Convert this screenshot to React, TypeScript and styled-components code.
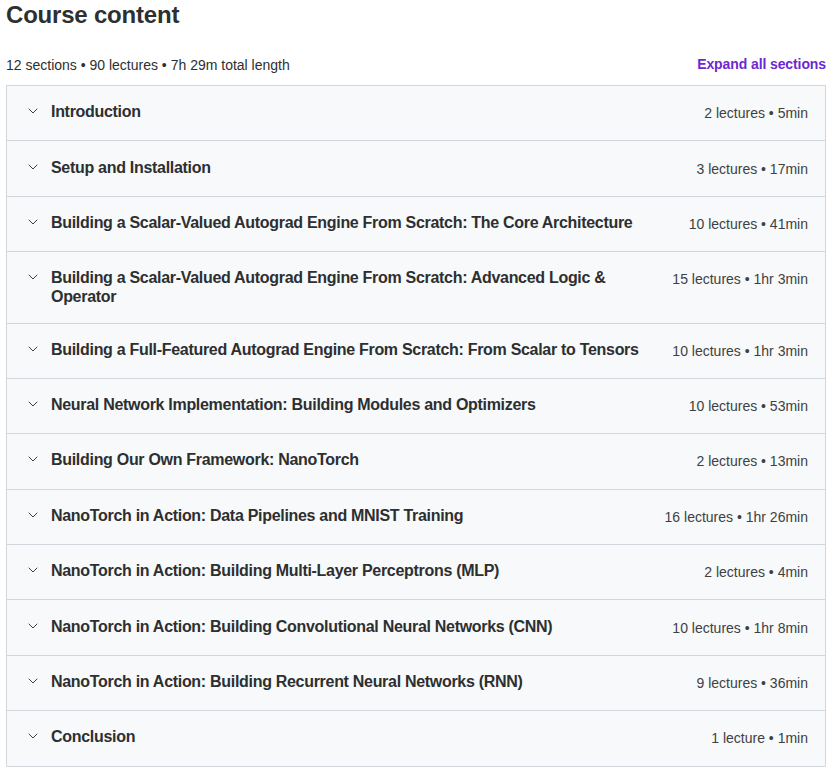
import React from 'react';
import styled, { createGlobalStyle } from 'styled-components';
import { ChevronDown } from 'lucide-react';

const GlobalStyle = createGlobalStyle`
    body {
        margin: 0;
        background: #ffffff;
        font-family: "Liberation Sans", Arial, sans-serif;
        color: #2d2f31;
    }
`;

const Page = styled.div`
    padding: 0 7px 0 6px;
`;

const Title = styled.h2`
    margin: 0;
    padding-top: 1px;
    font-size: 24px;
    line-height: 28px;
    font-weight: 700;
    letter-spacing: -0.2px;
    color: #2d2f31;
`;

const SummaryBar = styled.div`
    display: flex;
    justify-content: space-between;
    align-items: center;
    margin-top: 25px;
    height: 20px;
    margin-bottom: 11px;
`;

const SummaryText = styled.span`
    font-size: 14px;
    line-height: 20px;
    position: relative;
    top: 1px;
`;

const ExpandButton = styled.button`
    border: none;
    background: none;
    padding: 0;
    font-family: inherit;
    font-size: 14px;
    font-weight: 700;
    line-height: 20px;
    letter-spacing: -0.1px;
    color: #6d28d2;
    cursor: pointer;
`;

const SectionList = styled.div`
    border: 1px solid #d1d7dc;
    border-bottom: none;
`;

const SectionRow = styled.div`
    display: flex;
    align-items: flex-start;
    min-height: 21px;
    padding: 17.2px 17px 16.2px 18px;
    background: #f7f9fa;
    border-bottom: 1px solid #d1d7dc;
    cursor: pointer;
`;

const IconBox = styled.span`
    flex: 0 0 16px;
    width: 16px;
    height: 16px;
    display: flex;
    align-items: center;
    justify-content: center;
    margin-right: 10px;
    color: #3e4143;
`;

const SectionTitle = styled.span`
    flex: 1;
    font-size: 16px;
    font-weight: 700;
    line-height: 18.5px;
    letter-spacing: -0.3px;
`;

const SectionMeta = styled.span`
    flex: 0 0 auto;
    margin-left: 32px;
    font-size: 14px;
    line-height: 18.5px;
    white-space: nowrap;
    color: #3e4143;
    position: relative;
    top: 1px;
`;

type Section = {
    title: string;
    lectures: number;
    length: string;
};

const SECTIONS: Section[] = [
    { title: 'Introduction', lectures: 2, length: '5min' },
    { title: 'Setup and Installation', lectures: 3, length: '17min' },
    { title: 'Building a Scalar-Valued Autograd Engine From Scratch: The Core Architecture', lectures: 10, length: '41min' },
    { title: 'Building a Scalar-Valued Autograd Engine From Scratch: Advanced Logic & Operator', lectures: 15, length: '1hr 3min' },
    { title: 'Building a Full-Featured Autograd Engine From Scratch: From Scalar to Tensors', lectures: 10, length: '1hr 3min' },
    { title: 'Neural Network Implementation: Building Modules and Optimizers', lectures: 10, length: '53min' },
    { title: 'Building Our Own Framework: NanoTorch', lectures: 2, length: '13min' },
    { title: 'NanoTorch in Action: Data Pipelines and MNIST Training', lectures: 16, length: '1hr 26min' },
    { title: 'NanoTorch in Action: Building Multi-Layer Perceptrons (MLP)', lectures: 2, length: '4min' },
    { title: 'NanoTorch in Action: Building Convolutional Neural Networks (CNN)', lectures: 10, length: '1hr 8min' },
    { title: 'NanoTorch in Action: Building Recurrent Neural Networks (RNN)', lectures: 9, length: '36min' },
    { title: 'Conclusion', lectures: 1, length: '1min' },
];

const SectionItem = ({ section }: { section: Section }) => (
    <SectionRow>
        <IconBox>
            <ChevronDown size={16} strokeWidth={1.5} />
        </IconBox>
        <SectionTitle>{section.title}</SectionTitle>
        <SectionMeta>
            {section.lectures} {section.lectures === 1 ? 'lecture' : 'lectures'} • {section.length}
        </SectionMeta>
    </SectionRow>
);

export default function App() {
    return (
        <>
            <GlobalStyle />
            <Page>
                <Title>Course content</Title>
                <SummaryBar>
                    <SummaryText>12 sections • 90 lectures • 7h 29m total length</SummaryText>
                    <ExpandButton>Expand all sections</ExpandButton>
                </SummaryBar>
                <SectionList>
                    {SECTIONS.map((section) => (
                        <SectionItem key={section.title} section={section} />
                    ))}
                </SectionList>
            </Page>
        </>
    );
}
